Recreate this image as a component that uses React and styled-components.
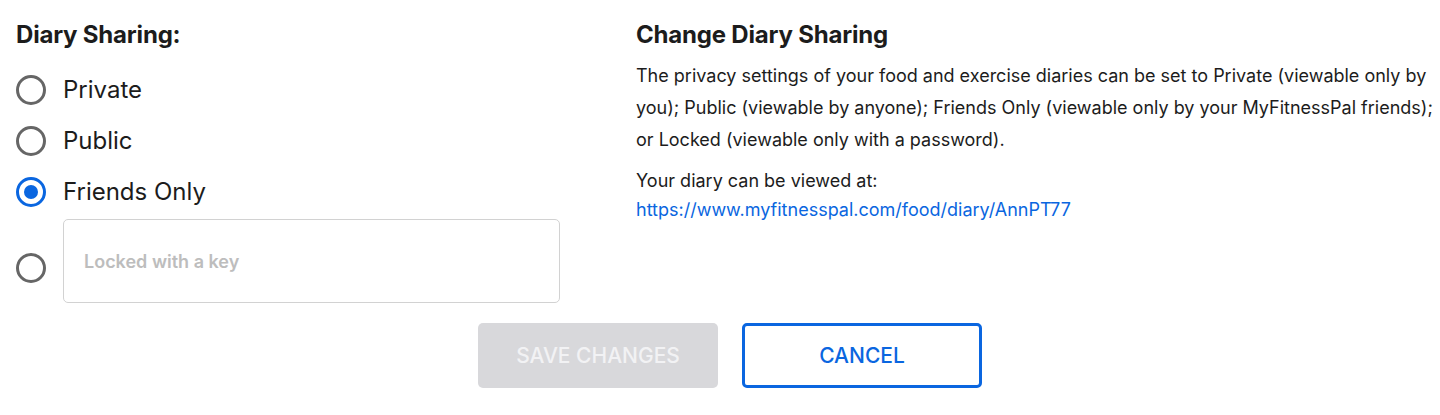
import * as React from "react";
import styled, { createGlobalStyle } from "styled-components";

const blue = "#0a66e0";
const text = "#1c1c1c";

const GlobalStyle = createGlobalStyle`
  body {
    margin: 0;
    background: #fff;
    font-family: Inter, "Noto Sans", sans-serif;
    color: ${text};
  }
`;

const Page = styled.div`
  width: 1440px;
  height: 415px;
  box-sizing: border-box;
  padding: 16px 4px 0 16px;
`;

const Columns = styled.div`
  display: grid;
  grid-template-columns: 544px 1fr;
  column-gap: 76px;
`;

const Title = styled.h2`
  margin: 5px 0 0 0;
  font-size: 24px;
  font-weight: 700;
  line-height: 28px;
  letter-spacing: -0.2px;
`;

const Options = styled.div`
  display: flex;
  flex-direction: column;
  margin-top: 15px;
`;

const Option = styled.label`
  display: flex;
  align-items: center;
  gap: 17px;
  height: 51px;
  font-size: 24px;
  cursor: pointer;
`;

const Radio = styled.span`
  flex: 0 0 auto;
  box-sizing: border-box;
  width: 30px;
  height: 30px;
  border-radius: 50%;
  border: 3px solid ${(p) => (p.checked ? blue : "#666")};
  display: flex;
  align-items: center;
  justify-content: center;
  &::after {
    content: "";
    display: ${(p) => (p.checked ? "block" : "none")};
    width: 14px;
    height: 14px;
    border-radius: 50%;
    background: ${blue};
  }
`;

const LockedRow = styled.div`
  display: flex;
  align-items: center;
  gap: 17px;
  margin-top: 2px;
`;

const LockedRadio = styled(Radio)`
  margin-top: 14px;
`;

const KeyInput = styled.input`
  box-sizing: border-box;
  width: 497px;
  height: 84px;
  border: 1px solid #d2d2d2;
  border-radius: 5px;
  padding: 0 20px;
  font-family: Inter, "Noto Sans", sans-serif;
  font-size: 18px;
  font-weight: 600;
  outline: none;
  &::placeholder {
    color: #bdbdbd;
  }
`;

const Paragraph = styled.p`
  margin: ${(p) => (p.tight ? "10px" : "11px")} 0 0 0;
  font-size: 18px;
  line-height: ${(p) => (p.tight ? "29px" : "32px")};
`;

const Link = styled.a`
  display: block;
  color: ${blue};
  text-decoration: none;
`;

const Buttons = styled.div`
  display: flex;
  justify-content: center;
  gap: 24px;
  margin-top: 20px;
  padding-left: 8px;
`;

const Button = styled.button`
  box-sizing: border-box;
  width: 240px;
  height: 65px;
  border-radius: 5px;
  font-family: Inter, "Noto Sans", sans-serif;
  font-size: 21px;
  font-weight: 500;
  text-transform: uppercase;
  border: ${(p) => (p.outline ? `3px solid ${blue}` : "none")};
  background: ${(p) => (p.outline ? "#fff" : "#d8d8db")};
  color: ${(p) => (p.outline ? blue : "#f2f2f4")};
  cursor: ${(p) => (p.disabled ? "default" : "pointer")};
`;

const options = ["Private", "Public", "Friends Only"];

export default function App() {
  const [choice, setChoice] = React.useState("Friends Only");
  return (
    <Page>
      <GlobalStyle />
      <Columns>
        <div>
          <Title>Diary Sharing:</Title>
          <Options>
            {options.map((o) => (
              <Option key={o} onClick={() => setChoice(o)}>
                <Radio checked={choice === o} />
                {o}
              </Option>
            ))}
            <LockedRow>
              <LockedRadio checked={choice === "Locked"} onClick={() => setChoice("Locked")} />
              <KeyInput placeholder="Locked with a key" />
            </LockedRow>
          </Options>
        </div>
        <div>
          <Title>Change Diary Sharing</Title>
          <Paragraph>
            The privacy settings of your food and exercise diaries can be set to Private (viewable only by
            you); Public (viewable by anyone); Friends Only (viewable only by your MyFitnessPal friends);
            or Locked (viewable only with a password).
          </Paragraph>
          <Paragraph tight>
            Your diary can be viewed at:
            <Link href="#">https://www.myfitnesspal.com/food/diary/AnnPT77</Link>
          </Paragraph>
        </div>
      </Columns>
      <Buttons>
        <Button disabled>Save Changes</Button>
        <Button outline>Cancel</Button>
      </Buttons>
    </Page>
  );
}
